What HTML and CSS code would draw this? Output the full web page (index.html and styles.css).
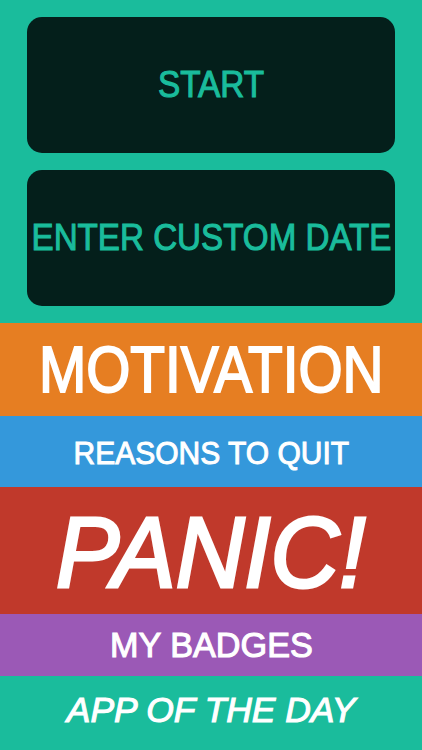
FILE: index.html
```html
<!DOCTYPE html>
<html>
<head>
<meta charset="utf-8">
<link rel="stylesheet" href="styles.css">
</head>
<body>
<div class="screen">
  <div class="top">
    <div class="btn"><span class="t start">START</span></div>
    <div class="btn"><span class="t custom">ENTER CUSTOM DATE</span></div>
  </div>
  <div class="band motivation"><span class="t mot">MOTIVATION</span></div>
  <div class="band reasons"><span class="t rea">REASONS TO QUIT</span></div>
  <div class="band panic"><span class="t pan">PANIC!</span></div>
  <div class="band badges"><span class="t bad">MY BADGES</span></div>
  <div class="band aotd"><span class="t app">APP OF THE DAY</span></div>
</div>
</body>
</html>
```

FILE: styles.css
```css
html, body {
  margin: 0;
  padding: 0;
  background: #1abc9c;
}
.screen {
  width: 422px;
  height: 750px;
  overflow: hidden;
  display: flex;
  flex-direction: column;
  font-family: "Liberation Sans", Arial, sans-serif;
  color: #fff;
}
.top {
  display: flex;
  flex-direction: column;
  gap: 17px;
  padding: 17px 27px 17px 27px;
}
.btn {
  height: 136px;
  background: #041f1b;
  border-radius: 15px;
  display: flex;
  align-items: center;
  justify-content: center;
  color: #1abc9c;
}
.t {
  display: inline-block;
  line-height: 1;
  white-space: nowrap;
  -webkit-text-stroke: 1.1px currentColor;
}
.start { font-size: 37.7px; transform: scaleX(0.885); }
.custom { font-size: 37.7px; transform: scaleX(0.88); }
.band {
  display: flex;
  align-items: center;
  justify-content: center;
}
.motivation { height: 93px; background: #e67e22; }
.reasons { height: 71px; background: #3498db; }
.panic { height: 127px; background: #c0392b; }
.badges { height: 62px; background: #9b59b6; }
.aotd { height: 75px; background: #1abc9c; flex: 1; }
.mot { font-size: 65.6px; transform: scaleX(0.865); -webkit-text-stroke-width: 2px; }
.rea { font-size: 32.1px; transform: scaleX(0.935); margin-top: 3px; -webkit-text-stroke-width: 1px; }
.pan { font-size: 100.5px; font-style: italic; transform: scaleX(0.945); margin-top: 3px; -webkit-text-stroke-width: 3.2px; }
.bad { font-size: 34.9px; transform: scaleX(0.98); }
.app { font-size: 34.9px; font-style: italic; transform: scaleX(1.015); margin-bottom: 6px; }
```
